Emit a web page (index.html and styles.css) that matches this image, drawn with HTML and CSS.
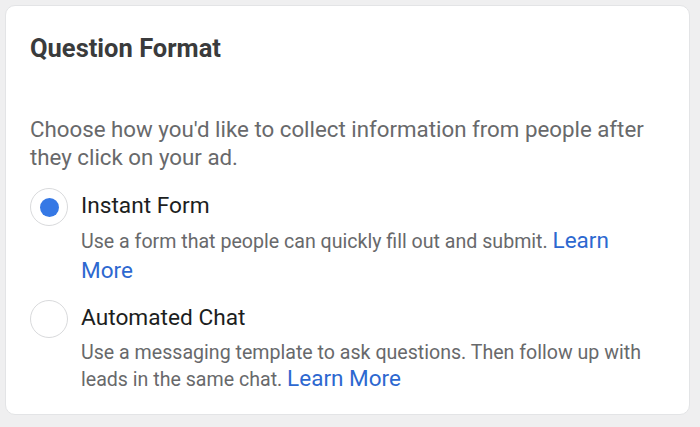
FILE: index.html
```html
<!DOCTYPE html>
<html>
<head>
<meta charset="utf-8">
<link rel="stylesheet" href="styles.css">
</head>
<body>
<div class="card">
  <h2 class="title">Question Format</h2>
  <p class="intro">Choose how you'd like to collect information from people after they click on your ad.</p>
  <div class="options">
    <div class="option">
      <span class="radio checked"><span class="dot"></span></span>
      <div class="option-body">
        <div class="label">Instant Form</div>
        <div class="desc desc-loose">Use a form that people can quickly fill out and submit. <a class="link" href="#">Learn More</a></div>
      </div>
    </div>
    <div class="option">
      <span class="radio"></span>
      <div class="option-body">
        <div class="label">Automated Chat</div>
        <div class="desc">Use a messaging template to ask questions. Then follow up with leads in the same chat. <a class="link" href="#">Learn More</a></div>
      </div>
    </div>
  </div>
</div>
</body>
</html>
```
FILE: styles.css
```css
html, body {
  margin: 0;
  padding: 0;
  background: #efeff0;
  font-family: Roboto, "Liberation Sans", sans-serif;
}
body {
  padding: 5px 10px 12px 5px;
}
.card {
  background: #fff;
  border: 1px solid #e3e4e6;
  border-radius: 10px;
  padding: 27px 39px 0 24px;
  height: 410px;
  box-sizing: border-box;
}
.title {
  margin: 0;
  font-size: 25.5px;
  font-weight: 700;
  color: #3a3b3c;
  line-height: 30px;
}
.intro {
  margin: 52px 0 0 0;
  font-size: 22.3px;
  line-height: 28px;
  color: #68696b;
}
.options {
  margin-top: 17px;
  display: flex;
  flex-direction: column;
  gap: 13px;
}
.option {
  display: flex;
  gap: 13px;
  align-items: flex-start;
}
.radio {
  width: 38px;
  height: 38px;
  flex: none;
  box-sizing: border-box;
  border: 1.5px solid #d9dadc;
  border-radius: 50%;
  display: flex;
  align-items: center;
  justify-content: center;
}
.dot {
  width: 19px;
  height: 19px;
  border-radius: 50%;
  background: #3578e5;
}
.option-body {
  padding-top: 5px;
}
.label {
  font-size: 22.7px;
  line-height: 26px;
  color: #1c1e21;
}
.desc {
  margin-top: 8px;
  font-size: 19.6px;
  line-height: 27px;
  color: #68696b;
}
.desc-loose {
  line-height: 30px;
}
.link {
  color: #2d68d0;
  text-decoration: none;
  font-size: 22.5px;
  line-height: 20px;
}
```
